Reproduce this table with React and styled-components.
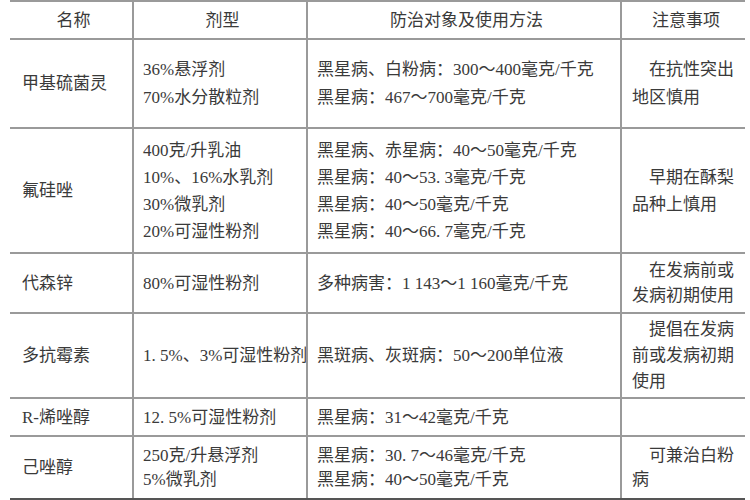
import React from "react";
import styled, { createGlobalStyle } from "styled-components";

const Global = createGlobalStyle`
  html, body { margin: 0; padding: 0; background: #ffffff; }
  body {
    font-family: "Liberation Serif", "Noto Sans CJK SC", serif;
    color: #3a3a3a;
  }
`;

const Sheet = styled.div`
  width: 735px;
  margin-left: 10px;
  border-top: 2px solid #9a9a9a;
  font-size: 17px;
`;

const Row = styled.div`
  display: grid;
  grid-template-columns: 122px 174px 314px 125px;
  height: ${(p) => p.h}px;
  box-sizing: border-box;
  border-bottom: 2px solid ${(p) => (p.last ? "#555555" : "#9a9a9a")};
  line-height: ${(p) => p.lh || 27}px;
`;

const Cell = styled.div`
  display: flex;
  flex-direction: column;
  justify-content: center;
  box-sizing: border-box;
  padding: 0 ${(p) => p.pr || 4}px 0 ${(p) => p.pl || 9}px;
  border-left: ${(p) => (p.first ? "none" : "2px solid #9a9a9a")};
  text-align: ${(p) => (p.center ? "center" : "left")};
  white-space: ${(p) => (p.wrap ? "normal" : "nowrap")};
  line-height: ${(p) => (p.lh ? p.lh + "px" : "inherit")};
`;

const Note = styled.p`
  margin: 0;
  text-indent: 1em;
  word-break: break-all;
`;

const Line = styled.div``;

const rows = [
  {
    h: 89,
    name: "甲基硫菌灵",
    forms: ["36%悬浮剂", "70%水分散粒剂"],
    uses: ["黑星病、白粉病：300～400毫克/千克", "黑星病：467～700毫克/千克"],
    note: "在抗性突出地区慎用",
    lh: 28,
  },
  {
    h: 125,
    name: "氟硅唑",
    forms: ["400克/升乳油", "10%、16%水乳剂", "30%微乳剂", "20%可湿性粉剂"],
    uses: [
      "黑星病、赤星病：40～50毫克/千克",
      "黑星病：40～53. 3毫克/千克",
      "黑星病：40～50毫克/千克",
      "黑星病：40～66. 7毫克/千克",
    ],
    note: "早期在酥梨品种上慎用",
    lh: 27,
  },
  {
    h: 60,
    name: "代森锌",
    forms: ["80%可湿性粉剂"],
    uses: ["多种病害：1 143～1 160毫克/千克"],
    note: "在发病前或发病初期使用",
    noteLh: 25,
  },
  {
    h: 85,
    name: "多抗霉素",
    forms: ["1. 5%、3%可湿性粉剂"],
    uses: ["黑斑病、灰斑病：50～200单位液"],
    note: "提倡在发病前或发病初期使用",
    noteLh: 26,
  },
  {
    h: 38,
    name: "R-烯唑醇",
    forms: ["12. 5%可湿性粉剂"],
    uses: ["黑星病：31～42毫克/千克"],
    note: "",
  },
  {
    h: 63,
    name: "己唑醇",
    forms: ["250克/升悬浮剂", "5%微乳剂"],
    uses: ["黑星病：30. 7～46毫克/千克", "黑星病：40～50毫克/千克"],
    note: "可兼治白粉病",
    lh: 24,
    last: true,
  },
];

export default function App() {
  return (
    <>
      <Global />
      <Sheet>
        <Row h={38}>
          <Cell first center pl={0} pr={0}>名称</Cell>
          <Cell center pl={0} pr={0}>剂型</Cell>
          <Cell center pl={0} pr={0}>防治对象及使用方法</Cell>
          <Cell center pl={0} pr={0}>注意事项</Cell>
        </Row>
        {rows.map((r) => (
          <Row key={r.name} h={r.h} lh={r.lh} last={r.last}>
            <Cell first pl={12}>{r.name}</Cell>
            <Cell>
              {r.forms.map((f) => (
                <Line key={f}>{f}</Line>
              ))}
            </Cell>
            <Cell>
              {r.uses.map((u) => (
                <Line key={u}>{u}</Line>
              ))}
            </Cell>
            <Cell wrap pl={10} pr={11} lh={r.noteLh}>
              {r.note && <Note>{r.note}</Note>}
            </Cell>
          </Row>
        ))}
      </Sheet>
    </>
  );
}
